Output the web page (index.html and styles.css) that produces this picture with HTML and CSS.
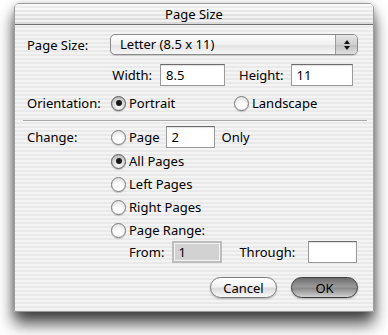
FILE: index.html
```html
<!DOCTYPE html>
<html lang="en">
<head>
  <meta charset="UTF-8">
  <meta name="viewport" content="width=device-width, initial-scale=1.0">
  <title>Page Size</title>
  <link rel="stylesheet" href="styles.css">
</head>
<body>
  <div class="window">
    <div class="titlebar">Page Size</div>

    <div class="content">
      <div class="row row-size">
        <span class="label">Page Size:</span>
        <div class="popup">
          <span class="popup-text">Letter (8.5 x 11)</span>
          <span class="popup-arrows">
            <svg width="8" height="12" viewBox="0 0 8 12">
              <path d="M4 1 L7 5 L1 5 Z" fill="#111"/>
              <path d="M4 11 L7 7 L1 7 Z" fill="#111"/>
            </svg>
          </span>
        </div>
      </div>

      <div class="row row-dims">
        <span class="field-label width-label">Width:</span>
        <div class="field width-field">8.5</div>
        <span class="field-label height-label">Height:</span>
        <div class="field height-field">11</div>
      </div>

      <div class="row row-orient">
        <span class="label">Orientation:</span>
        <div class="radio portrait">
          <span class="radio-dot checked"></span>
          <span>Portrait</span>
        </div>
        <div class="radio">
          <span class="radio-dot"></span>
          <span>Landscape</span>
        </div>
      </div>

      <div class="separator"></div>

      <div class="row row-page">
        <span class="label">Change:</span>
        <div class="radio">
          <span class="radio-dot"></span>
          <span>Page</span>
        </div>
        <div class="field page-field">2</div>
        <span class="only">Only</span>
      </div>

      <div class="row radio-row">
        <div class="radio">
          <span class="radio-dot checked"></span>
          <span>All Pages</span>
        </div>
      </div>

      <div class="row radio-row">
        <div class="radio">
          <span class="radio-dot"></span>
          <span>Left Pages</span>
        </div>
      </div>

      <div class="row radio-row">
        <div class="radio">
          <span class="radio-dot"></span>
          <span>Right Pages</span>
        </div>
      </div>

      <div class="row radio-row">
        <div class="radio">
          <span class="radio-dot"></span>
          <span>Page Range:</span>
        </div>
      </div>

      <div class="row row-range">
        <span class="field-label">From:</span>
        <div class="field from-field">1</div>
        <span class="field-label through-label">Through:</span>
        <div class="field through-field"></div>
      </div>

      <div class="buttons">
        <button class="btn">Cancel</button>
        <button class="btn btn-default">OK</button>
      </div>
    </div>
  </div>
</body>
</html>
```

FILE: styles.css
```css
* {
  box-sizing: border-box;
  margin: 0;
  padding: 0;
}

html,
body {
  height: 100%;
}

body {
  background-color: #fff;
  font-family: 'Noto Sans', 'DejaVu Sans', sans-serif;
  font-size: 13px;
  color: #000;
  padding: 3px 14px 0 14px;
  overflow: hidden;
}

.window {
  width: 360px;
  height: 309px;
  border: 1px solid #9c9c9c;
  border-radius: 5px 5px 0 0;
  background: repeating-linear-gradient(#f4f4f4 0 2px, #e9e9e9 2px 4px);
  box-shadow: 0 12px 16px rgba(0, 0, 0, 0.7), 0 2px 8px rgba(0, 0, 0, 0.25);
  overflow: hidden;
}

.titlebar {
  height: 21px;
  line-height: 20px;
  text-align: center;
  border-bottom: 1px solid #6e6e6e;
  background:
    repeating-linear-gradient(rgba(255, 255, 255, 0.5) 0 2px, rgba(0, 0, 0, 0.03) 2px 4px),
    linear-gradient(#f6f6f6, #e0e0e0);
}

.content {
  padding: 9px 15px 0 12px;
}

.row {
  display: flex;
  align-items: center;
}

.label {
  width: 83px;
  flex-shrink: 0;
}

/* page size popup */
.row-size {
  height: 21px;
}

.popup {
  flex: 1;
  height: 21px;
  display: flex;
  border: 1px solid #8a8a8a;
  border-radius: 5px;
  background: linear-gradient(#ffffff, #f0f0f0 50%, #e2e2e2 51%, #f6f6f6);
  box-shadow: 0 1px 1px rgba(0, 0, 0, 0.15);
}

.popup-text {
  flex: 1;
  padding-left: 9px;
  line-height: 19px;
}

.popup-arrows {
  width: 22px;
  border-left: 1px solid #9a9a9a;
  display: flex;
  align-items: center;
  justify-content: center;
  background: linear-gradient(#e6e6e6, #cfcfcf 50%, #bdbdbd 51%, #e0e0e0);
  border-radius: 0 4px 4px 0;
}

/* text fields */
.field {
  height: 22px;
  line-height: 20px;
  padding-left: 5px;
  background: #fff;
  border: 1px solid #9a9a9a;
  border-top-color: #6c6c6c;
  box-shadow: inset 0 1px 1px rgba(0, 0, 0, 0.12);
}

.row-dims {
  margin-top: 9px;
  padding-left: 83px;
}

.width-label {
  width: 42px;
  text-align: right;
}

.width-field {
  width: 65px;
  margin-left: 8px;
}

.height-label {
  margin-left: 14px;
}

.height-field {
  width: 62px;
  margin-left: 7px;
}

/* radios */
.radio {
  display: flex;
  align-items: center;
  gap: 3px;
}

.radio-dot {
  width: 15px;
  height: 15px;
  border-radius: 50%;
  border: 1px solid #7c7c7c;
  background: radial-gradient(circle at 50% 70%, #ffffff 30%, #e4e4e4 75%, #c8c8c8);
  box-shadow: 0 1px 1px rgba(0, 0, 0, 0.2);
  display: flex;
  align-items: center;
  justify-content: center;
  margin-left: 1px;
}

.radio-dot.checked {
  border-color: #5c5c5c;
  background: radial-gradient(circle at 50% 70%, #f2f2f2 20%, #c4c4c4 70%, #9a9a9a);
}

.radio-dot.checked::after {
  content: '';
  width: 6px;
  height: 6px;
  border-radius: 50%;
  background: #1a1a1a;
}

.row-orient {
  margin-top: 8px;
  height: 18px;
}

.portrait {
  width: 123px;
}

.separator {
  margin: 8px 0 0 -4px;
  width: 344px;
  height: 2px;
  border-top: 1px solid #a8a8a8;
  border-bottom: 1px solid #fafafa;
}

.row-page {
  margin-top: 4px;
  height: 22px;
}

.page-field {
  width: 49px;
  margin-left: 6px;
}

.only {
  margin-left: 7px;
}

.radio-row {
  padding-left: 83px;
  height: 18px;
  margin-top: 5px;
}

.row-page + .radio-row {
  margin-top: 4px;
}

/* page range */
.row-range {
  margin-top: 2px;
  padding-left: 102px;
}

.from-field {
  width: 50px;
  margin-left: 8px;
  background: #d2d2d2;
  border: 2px solid #bdbdbd;
  box-shadow: inset 0 0 0 1px #f4f4f4;
  line-height: 18px;
  padding-left: 4px;
}

.through-label {
  margin-left: 17px;
}

.through-field {
  width: 49px;
  margin-left: 13px;
}

/* buttons */
.buttons {
  display: flex;
  justify-content: flex-end;
  gap: 14px;
  margin-top: 14px;
}

.btn {
  width: 67px;
  height: 21px;
  border-radius: 11px;
  font-family: inherit;
  font-size: 13px;
  color: #000;
  border: 1px solid #7a7a7a;
  background: linear-gradient(#ffffff, #f2f2f2 45%, #dcdcdc 55%, #f8f8f8);
  box-shadow: 0 1px 2px rgba(0, 0, 0, 0.25);
}

.btn-default {
  border-color: #3c3c3c;
  background: linear-gradient(#6c6c6c, #9a9a9a 45%, #8a8a8a 55%, #d0d0d0);
}
```
